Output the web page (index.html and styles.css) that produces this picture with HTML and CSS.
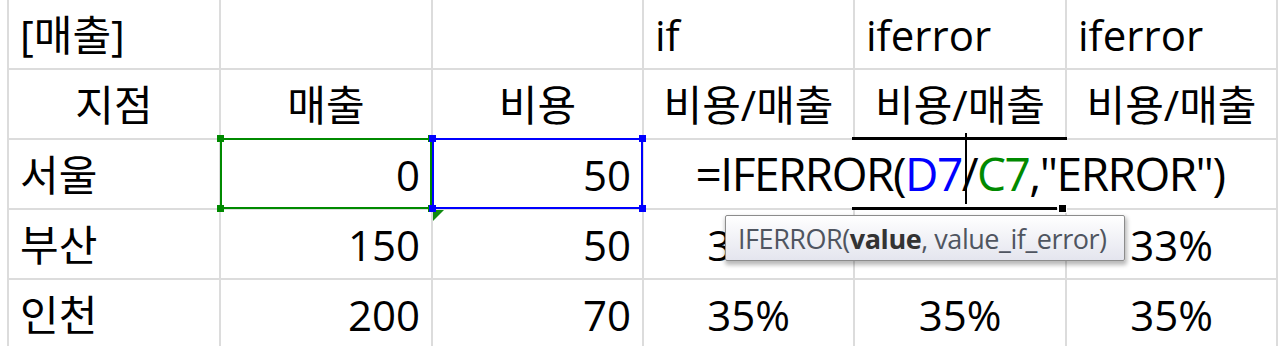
FILE: index.html
```html
<!DOCTYPE html>
<html lang="ko">
<head>
<meta charset="utf-8">
<title>IFERROR</title>
<link rel="stylesheet" href="styles.css">
</head>
<body>
<div class="sheet">
  <div class="cell left">[매출]</div>
  <div class="cell"></div>
  <div class="cell"></div>
  <div class="cell left">if</div>
  <div class="cell left">iferror</div>
  <div class="cell left">iferror</div>

  <div class="cell center">지점</div>
  <div class="cell center">매출</div>
  <div class="cell center">비용</div>
  <div class="cell center">비용/매출</div>
  <div class="cell center">비용/매출</div>
  <div class="cell center">비용/매출</div>

  <div class="cell left">서울</div>
  <div class="cell right ref ref-green">0<i class="h tl"></i><i class="h tr"></i><i class="h bl"></i><i class="h br"></i></div>
  <div class="cell right ref ref-blue">50<i class="h tl"></i><i class="h tr"></i><i class="h bl"></i><i class="h br"></i></div>
  <div class="cell open"></div>
  <div class="cell center open editing"><span class="formula">=IFERROR(<span class="c-blue">D7</span><span class="caret"></span>/<span class="c-green">C7</span>,"ERROR")</span><i class="fill"></i></div>
  <div class="cell"></div>

  <div class="cell left">부산</div>
  <div class="cell right">150</div>
  <div class="cell right flagged">50</div>
  <div class="cell center">33%</div>
  <div class="cell center"></div>
  <div class="cell center">33%</div>

  <div class="cell left">인천</div>
  <div class="cell right">200</div>
  <div class="cell right">70</div>
  <div class="cell center">35%</div>
  <div class="cell center">35%</div>
  <div class="cell center">35%</div>

  <div class="tip">IFERROR(<b>value</b>, value_if_error)</div>
</div>
</body>
</html>
```

FILE: styles.css
```css
html, body {
  margin: 0;
  padding: 0;
  background: #ffffff;
}
body {
  width: 1280px;
  height: 346px;
  overflow: hidden;
}
.sheet {
  position: relative;
  display: grid;
  grid-template-columns: 212px 212px 211px 211px 212px 211px;
  grid-auto-rows: 70px;
  margin-left: 7px;
  border-left: 2px solid #dcdcdc;
  width: max-content;
  font-family: "Open Sans", "Noto Sans CJK KR", sans-serif;
  font-size: 42px;
  line-height: 1;
  color: #000;
}
.cell {
  position: relative;
  box-sizing: border-box;
  display: flex;
  align-items: flex-end;
  padding: 0 11px 12px;
  border-right: 2px solid #dcdcdc;
  border-bottom: 2px solid #dcdcdc;
  white-space: nowrap;
}
.left { justify-content: flex-start; }
.right { justify-content: flex-end; }
.center { justify-content: center; }
.open { border-right-color: transparent; }

/* referenced ranges */
.ref::before {
  content: "";
  position: absolute;
  left: -1px;
  top: -2px;
  right: -1px;
  bottom: -1px;
  border: 2px solid currentColor;
  pointer-events: none;
}
.ref-green::before { border-color: #008a00; }
.ref-blue::before { border-color: #0000ff; }
.h {
  position: absolute;
  width: 7px;
  height: 7px;
  z-index: 2;
}
.ref-green .h { background: #008a00; }
.ref-blue .h { background: #0000ff; }
.h.tl { left: -4px; top: -5px; }
.h.tr { right: -4px; top: -5px; }
.h.bl { left: -4px; bottom: -4px; }
.h.br { right: -4px; bottom: -4px; }

/* error indicator */
.flagged::before {
  content: "";
  position: absolute;
  left: 0;
  top: 0;
  width: 0;
  height: 0;
  border-top: 11px solid #108a10;
  border-right: 11px solid transparent;
}

/* cell being edited */
.editing {
  z-index: 1;
}
.editing::before {
  content: "";
  position: absolute;
  left: -3px;
  right: -2px;
  top: -3px;
  height: 3px;
  background: #000;
}
.editing::after {
  content: "";
  position: absolute;
  left: -3px;
  right: 8px;
  bottom: -2px;
  height: 3px;
  background: #000;
}
.fill {
  position: absolute;
  right: -2px;
  bottom: -5px;
  width: 7px;
  height: 7px;
  background: #000;
  border: 1px solid #fff;
}
.formula {
  position: relative;
  display: inline-block;
  font-size: 46px;
  letter-spacing: -1.5px;
}
.c-blue { color: #0000ff; }
.c-green { color: #008a00; }
.caret {
  position: relative;
}
.caret::before {
  content: "";
  position: absolute;
  left: 3px;
  top: -9px;
  width: 2px;
  height: 71px;
  background: #000;
}

/* tooltip */
.tip {
  position: absolute;
  left: 716px;
  top: 215px;
  width: 400px;
  height: 46px;
  box-sizing: border-box;
  padding: 0 0 0 12px;
  display: flex;
  align-items: center;
  border: 1px solid #8c8c8c;
  border-radius: 2px;
  background: linear-gradient(#ffffff, #e4e5ee);
  box-shadow: 1px 3px 4px 1px rgba(0, 0, 0, 0.28);
  color: #4f5560;
  font-family: "Open Sans", sans-serif;
  font-size: 27px;
  letter-spacing: -0.45px;
  line-height: 1;
  white-space: nowrap;
  z-index: 5;
}
.tip b {
  color: #333333;
  font-weight: 700;
}
```
